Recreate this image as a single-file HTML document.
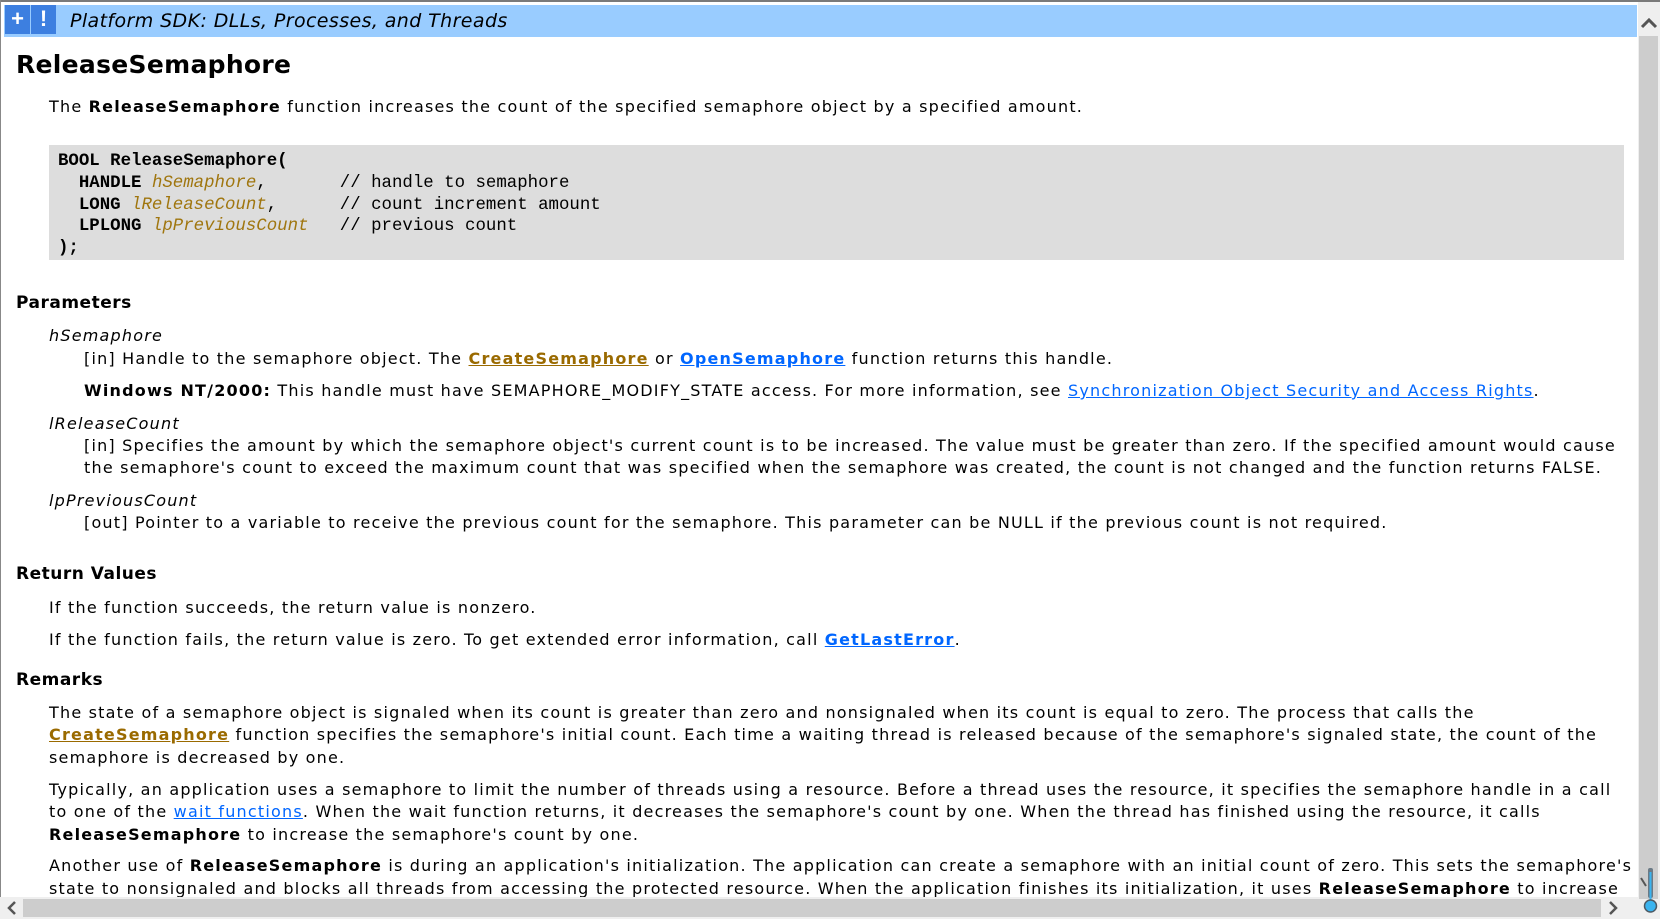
<!DOCTYPE html>
<html><head><meta charset="utf-8"><style>
html,body{margin:0;padding:0;width:1660px;height:919px;overflow:hidden;background:#fff}
body{position:relative;font-family:"DejaVu Sans","Liberation Sans",sans-serif;font-size:16px;letter-spacing:1.2px;color:#000}
.top{position:absolute;left:0;top:0;width:1660px;height:2px;background:#7a7a7a}
.lb{position:absolute;left:0;top:0;width:1px;height:919px;background:#888}
.hdr{position:absolute;left:4px;top:5px;width:1633px;height:32px;background:#99ccff}
.btn{position:absolute;top:5px;width:25px;height:29px;background:#3d7fe0;color:#fff;font:bold 22px "Liberation Sans",sans-serif;letter-spacing:0;text-align:center;line-height:27px}
.hdr span{position:absolute;left:66px;top:5px;font-style:italic;font-size:19px;letter-spacing:0.4px}
.t{position:absolute;white-space:nowrap}
h1{position:absolute;left:16px;top:50px;margin:0;font:bold 25px "DejaVu Sans",sans-serif;letter-spacing:0.3px}
.h2{font-weight:bold;font-size:17px;left:16px;letter-spacing:0.5px}
.code{position:absolute;left:49px;top:145px;width:1575px;height:115px;background:#dddddd;letter-spacing:0}
.code pre{margin:0;position:absolute;left:9px;top:6px;font-family:"Liberation Mono",monospace;font-size:17.4px;line-height:21.8px}
.code i{color:#a0760f}
a.o{color:#9a6a00;font-weight:bold;text-decoration:underline}
a.b{color:#0066ff;font-weight:bold;text-decoration:underline}
a.l{color:#0066ff;text-decoration:underline}
.vs{position:absolute;left:1638px;top:2px;width:22px;height:917px;background:#efefef}
.vs .tr{position:absolute;left:1px;top:34px;width:19px;height:863px;background:#cdcdcd}
.hs{position:absolute;left:0;top:897px;width:1638px;height:22px;background:#efefef}
.hs .tr{position:absolute;left:23px;top:2px;width:1578px;height:18px;background:#cdcdcd}
</style></head><body>
<div class="top"></div><div class="lb"></div>
<div class="hdr"><span>Platform SDK: DLLs, Processes, and Threads</span></div>
<div class="btn" style="left:5px">+</div><div class="btn" style="left:31px">!</div>
<h1>ReleaseSemaphore</h1>
<div class="t" style="left:49px;top:97px">The <b>ReleaseSemaphore</b> function increases the count of the specified semaphore object by a specified amount.</div>
<div class="code"><pre><b>BOOL ReleaseSemaphore(</b>
  <b>HANDLE</b> <i>hSemaphore</i>,       // handle to semaphore
  <b>LONG</b> <i>lReleaseCount</i>,      // count increment amount
  <b>LPLONG</b> <i>lpPreviousCount</i>   // previous count
<b>);</b></pre></div>
<div class="t h2" style="top:293px">Parameters</div>
<div class="t" style="left:49px;top:326px;font-style:italic">hSemaphore</div>
<div class="t" style="left:84px;top:349px">[in] Handle to the semaphore object. The <a class="o">CreateSemaphore</a> or <a class="b">OpenSemaphore</a> function returns this handle.</div>
<div class="t" style="left:84px;top:381px"><b>Windows NT/2000:</b> This handle must have SEMAPHORE_MODIFY_STATE access. For more information, see <a class="l">Synchronization Object Security and Access Rights</a>.</div>
<div class="t" style="left:49px;top:414px;font-style:italic">lReleaseCount</div>
<div class="t" style="left:84px;top:436px">[in] Specifies the amount by which the semaphore object's current count is to be increased. The value must be greater than zero. If the specified amount would cause</div>
<div class="t" style="left:84px;top:458px">the semaphore's count to exceed the maximum count that was specified when the semaphore was created, the count is not changed and the function returns FALSE.</div>
<div class="t" style="left:49px;top:491px;font-style:italic">lpPreviousCount</div>
<div class="t" style="left:84px;top:513px">[out] Pointer to a variable to receive the previous count for the semaphore. This parameter can be NULL if the previous count is not required.</div>
<div class="t h2" style="top:564px">Return Values</div>
<div class="t" style="left:49px;top:598px">If the function succeeds, the return value is nonzero.</div>
<div class="t" style="left:49px;top:630px">If the function fails, the return value is zero. To get extended error information, call <a class="b">GetLastError</a>.</div>
<div class="t h2" style="top:670px">Remarks</div>
<div class="t" style="left:49px;top:703px">The state of a semaphore object is signaled when its count is greater than zero and nonsignaled when its count is equal to zero. The process that calls the</div>
<div class="t" style="left:49px;top:725px"><a class="o">CreateSemaphore</a> function specifies the semaphore's initial count. Each time a waiting thread is released because of the semaphore's signaled state, the count of the</div>
<div class="t" style="left:49px;top:748px">semaphore is decreased by one.</div>
<div class="t" style="left:49px;top:780px">Typically, an application uses a semaphore to limit the number of threads using a resource. Before a thread uses the resource, it specifies the semaphore handle in a call</div>
<div class="t" style="left:49px;top:802px">to one of the <a class="l">wait functions</a>. When the wait function returns, it decreases the semaphore's count by one. When the thread has finished using the resource, it calls</div>
<div class="t" style="left:49px;top:825px"><b>ReleaseSemaphore</b> to increase the semaphore's count by one.</div>
<div class="t" style="left:49px;top:856px">Another use of <b>ReleaseSemaphore</b> is during an application's initialization. The application can create a semaphore with an initial count of zero. This sets the semaphore's</div>
<div class="t" style="left:49px;top:879px">state to nonsignaled and blocks all threads from accessing the protected resource. When the application finishes its initialization, it uses <b>ReleaseSemaphore</b> to increase</div>
<div class="vs"><div class="tr"></div>
<svg style="position:absolute;left:2px;top:14px" width="18" height="14"><path d="M2 11 L9 4 L16 11" stroke="#555" stroke-width="3" fill="none"/></svg>
<svg style="position:absolute;left:0;top:840px" width="22" height="76"><rect x="10" y="26" width="5" height="30" rx="2" fill="#6b7a86"/><line x1="12.5" y1="30" x2="12.5" y2="60" stroke="#3ab4f0" stroke-width="2"/><circle cx="12.5" cy="64" r="6" fill="#3ab4f0" stroke="#4d5a64" stroke-width="1.5"/><path d="M3 36 L8 44" stroke="#555" stroke-width="2"/></svg>
</div>
<div class="hs"><div class="tr"></div>
<svg style="position:absolute;left:6px;top:3px" width="12" height="16"><path d="M9 2 L3 8 L9 14" stroke="#555" stroke-width="2.5" fill="none"/></svg>
<svg style="position:absolute;left:1607px;top:3px" width="12" height="16"><path d="M3 2 L9 8 L3 14" stroke="#555" stroke-width="2.5" fill="none"/></svg>
</div>
</body></html>
